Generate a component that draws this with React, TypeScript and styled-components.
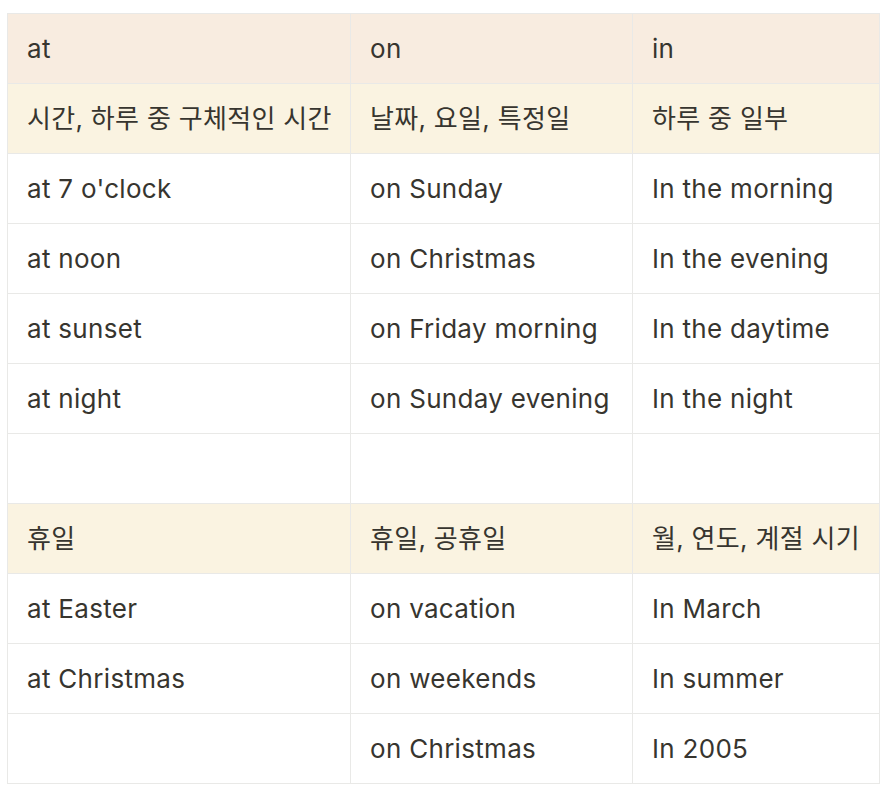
import React from 'react';
import styled, { createGlobalStyle } from 'styled-components';

const GlobalStyle = createGlobalStyle`
  html, body {
    margin: 0;
    padding: 0;
    background: #ffffff;
  }
  body {
    font-family: Inter, "Noto Sans CJK KR", sans-serif;
    color: #37352f;
  }
`;

type Tone = 'head' | 'note' | 'plain';

const rows: { tone: Tone; cells: string[] }[] = [
  { tone: 'head', cells: ['at', 'on', 'in'] },
  { tone: 'note', cells: ['시간, 하루 중 구체적인 시간', '날짜, 요일, 특정일', '하루 중 일부'] },
  { tone: 'plain', cells: ["at 7 o'clock", 'on Sunday', 'In the morning'] },
  { tone: 'plain', cells: ['at noon', 'on Christmas', 'In the evening'] },
  { tone: 'plain', cells: ['at sunset', 'on Friday morning', 'In the daytime'] },
  { tone: 'plain', cells: ['at night', 'on Sunday evening', 'In the night'] },
  { tone: 'plain', cells: ['', '', ''] },
  { tone: 'note', cells: ['휴일', '휴일, 공휴일', '월, 연도, 계절 시기'] },
  { tone: 'plain', cells: ['at Easter', 'on vacation', 'In March'] },
  { tone: 'plain', cells: ['at Christmas', 'on weekends', 'In summer'] },
  { tone: 'plain', cells: ['', 'on Christmas', 'In 2005'] },
];

const columnWidths = [343, 282, 247];

const backgrounds: Record<Tone, string> = {
  head: '#f8ece0',
  note: '#faf3e1',
  plain: '#ffffff',
};

const Page = styled.div`
  padding: 13px 6px 0 7px;
`;

const Table = styled.table`
  border-collapse: collapse;
  table-layout: fixed;
  width: 872px;
`;

const Column = styled.col<{ $width: number }>`
  width: ${(p) => p.$width}px;
`;

const Row = styled.tr<{ $tone: Tone }>`
  height: 70px;
  background: ${(p) => backgrounds[p.$tone]};
`;

const Cell = styled.td`
  border: 1.5px solid #e9e9e7;
  padding: 0 12px 0 19px;
  font-size: 26px;
  line-height: 34px;
  letter-spacing: 0.3px;
  vertical-align: middle;
  white-space: nowrap;
  overflow: hidden;
  color: #37352f;
`;

export default function App() {
  return (
    <Page>
      <GlobalStyle />
      <Table>
        <colgroup>
          {columnWidths.map((w, i) => (
            <Column key={i} $width={w} />
          ))}
        </colgroup>
        <tbody>
          {rows.map((row, i) => (
            <Row key={i} $tone={row.tone}>
              {row.cells.map((text, j) => (
                <Cell key={j}>{text}</Cell>
              ))}
            </Row>
          ))}
        </tbody>
      </Table>
    </Page>
  );
}
